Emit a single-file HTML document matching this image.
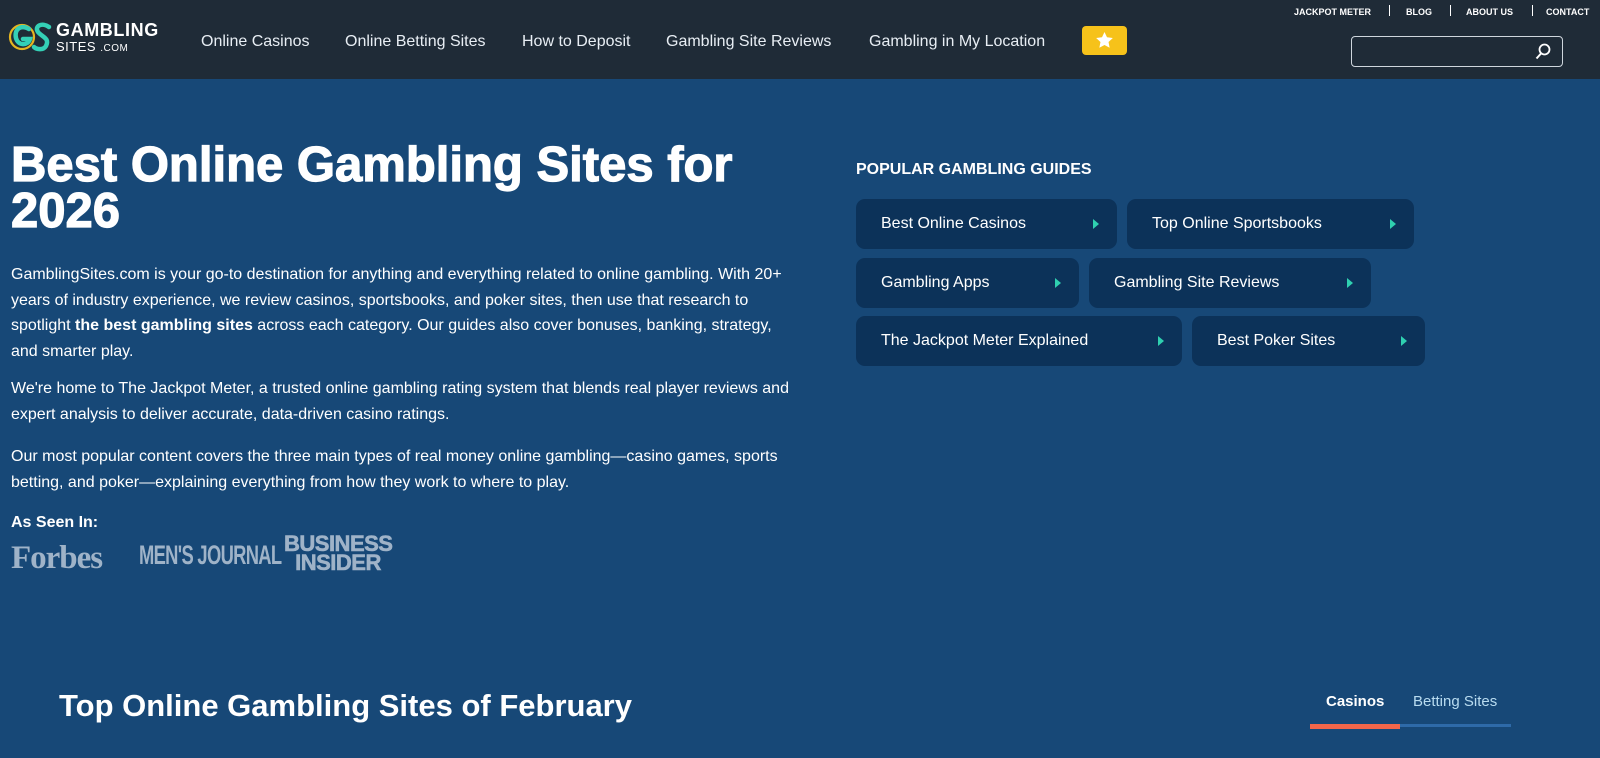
<!DOCTYPE html>
<html><head><meta charset="utf-8"><style>
*{margin:0;padding:0;box-sizing:border-box}
body{width:1600px;height:758px;overflow:hidden;background:#174877;font-family:"Liberation Sans",Arial,sans-serif;color:#fff;position:relative}
.hdr{position:absolute;left:0;top:0;width:1600px;height:79px;background:#1f2b37}
.nav a{position:absolute;top:33px;font-size:16px;color:#e8eef4;text-decoration:none}
.top a{position:absolute;top:7px;font-size:9px;font-weight:bold;color:#fff}
.sep{position:absolute;top:5px;width:1px;height:11px;background:#fff}
.search{position:absolute;left:1351px;top:36px;width:212px;height:31px;border:1px solid #cfd6dd;border-radius:4px}
.star{position:absolute;left:1082px;top:26px;width:45px;height:29px;background:#f6c21a;border-radius:4px}
h1{position:absolute;left:11px;top:142px;font-size:49px;line-height:46px;font-weight:bold;letter-spacing:0px;-webkit-text-stroke:1.2px #fff;width:800px;color:#fff}
p{position:absolute;left:11px;font-size:16px;line-height:25.5px;width:785px;color:#fff}
.btn{position:absolute;height:50px;background:#0c3259;border-radius:9px;font-size:16px;padding:0 0 0 25px;line-height:50px}
.btn:after{content:"";position:absolute;right:18px;top:20px;border-left:6px solid #2fd0b0;border-top:5px solid transparent;border-bottom:5px solid transparent}
</style></head><body>
<div class="hdr">
 <svg style="position:absolute;left:6px;top:20px" width="50" height="36" viewBox="0 0 50 36">
  <circle cx="16" cy="17" r="12" fill="none" stroke="#e6b520" stroke-width="2.2"/>
  <path d="M23 9 C14 4 8 10 10 18 C12 26 22 26 24 19 L17 19" fill="none" stroke="#34d0b6" stroke-width="4.5" stroke-linecap="round"/>
  <path d="M43 7 C36 2 28 6 32 12 C36 17 44 18 40 26 C37 31 30 29 28 27" fill="none" stroke="#34d0b6" stroke-width="4.5" stroke-linecap="round"/>
 </svg>
 <div style="position:absolute;left:56px;top:20px;font-size:18px;font-weight:bold;letter-spacing:0.6px">GAMBLING</div>
 <div style="position:absolute;left:56px;top:39px;font-size:13px;letter-spacing:0.5px">SITES <span style="font-size:10px">.COM</span></div>
 <div class="nav">
  <a style="left:201px">Online Casinos</a><a style="left:345px">Online Betting Sites</a><a style="left:522px">How to Deposit</a><a style="left:666px">Gambling Site Reviews</a><a style="left:869px">Gambling in My Location</a>
 </div>
 <div class="star"><svg style="position:absolute;left:14px;top:6px" width="17" height="16" viewBox="0 0 24 23"><path d="M12 0l3.6 7.6 8.4 1-6.2 5.8 1.6 8.3L12 18.6 4.6 22.7l1.6-8.3L0 8.6l8.4-1z" fill="#fff"/></svg></div>
 <div class="top"><a style="left:1294px">JACKPOT METER</a><a style="left:1406px">BLOG</a><a style="left:1466px">ABOUT US</a><a style="left:1546px">CONTACT</a></div>
 <div class="sep" style="left:1389px"></div><div class="sep" style="left:1450px"></div><div class="sep" style="left:1532px"></div>
 <div class="search"><svg style="position:absolute;left:183px;top:6px" width="16" height="18" viewBox="0 0 16 18"><circle cx="9.5" cy="6.5" r="5" fill="none" stroke="#fff" stroke-width="1.8"/><path d="M6 10.5L1.5 15.5" stroke="#fff" stroke-width="2"/></svg></div>
</div>
<h1>Best Online Gambling Sites for 2026</h1>
<p style="top:262px">GamblingSites.com is your go-to destination for anything and everything related to online gambling. With 20+ years of industry experience, we review casinos, sportsbooks, and poker sites, then use that research to spotlight <b>the best gambling sites</b> across each category. Our guides also cover bonuses, banking, strategy, and smarter play.</p>
<p style="top:376px">We're home to The Jackpot Meter, a trusted online gambling rating system that blends real player reviews and expert analysis to deliver accurate, data-driven casino ratings.</p>
<p style="top:444px">Our most popular content covers the three main types of real money online gambling—casino games, sports betting, and poker—explaining everything from how they work to where to play.</p>
<div style="position:absolute;left:11px;top:514px;font-size:16px;font-weight:bold">As Seen In:</div>
<div style="position:absolute;left:11px;top:540px;font-family:'Liberation Serif',serif;font-size:33px;font-weight:bold;color:#9fb3c8;letter-spacing:-1px">Forbes</div>
<div style="position:absolute;left:139px;top:540px;font-size:27px;font-weight:bold;color:#9fb3c8;transform:scaleX(0.68);transform-origin:left;letter-spacing:-1px;white-space:nowrap">MEN'S JOURNAL</div>
<div style="position:absolute;left:284px;top:534px;font-size:22px;line-height:19px;font-weight:bold;-webkit-text-stroke:0.6px #9fb3c8;color:#9fb3c8;text-align:center;width:108px;letter-spacing:-0.5px">BUSINESS<br>INSIDER</div>
<div style="position:absolute;left:856px;top:161px;font-size:16px;font-weight:bold">POPULAR GAMBLING GUIDES</div>
<div class="btn" style="left:856px;top:199px;width:261px">Best Online Casinos</div>
<div class="btn" style="left:1127px;top:199px;width:287px">Top Online Sportsbooks</div>
<div class="btn" style="left:856px;top:258px;width:223px">Gambling Apps</div>
<div class="btn" style="left:1089px;top:258px;width:282px">Gambling Site Reviews</div>
<div class="btn" style="left:856px;top:316px;width:326px">The Jackpot Meter Explained</div>
<div class="btn" style="left:1192px;top:316px;width:233px">Best Poker Sites</div>
<div style="position:absolute;left:59px;top:688px;font-size:31px;font-weight:bold">Top Online Gambling Sites of February</div>
<div style="position:absolute;left:1326px;top:693px;font-size:15px;font-weight:bold">Casinos</div>
<div style="position:absolute;left:1413px;top:693px;font-size:15px;color:#b9dcf0">Betting Sites</div>
<div style="position:absolute;left:1310px;top:724px;width:90px;height:5px;background:#f2664a"></div>
<div style="position:absolute;left:1400px;top:724px;width:111px;height:3px;background:#2e6aa8"></div>
</body></html>
